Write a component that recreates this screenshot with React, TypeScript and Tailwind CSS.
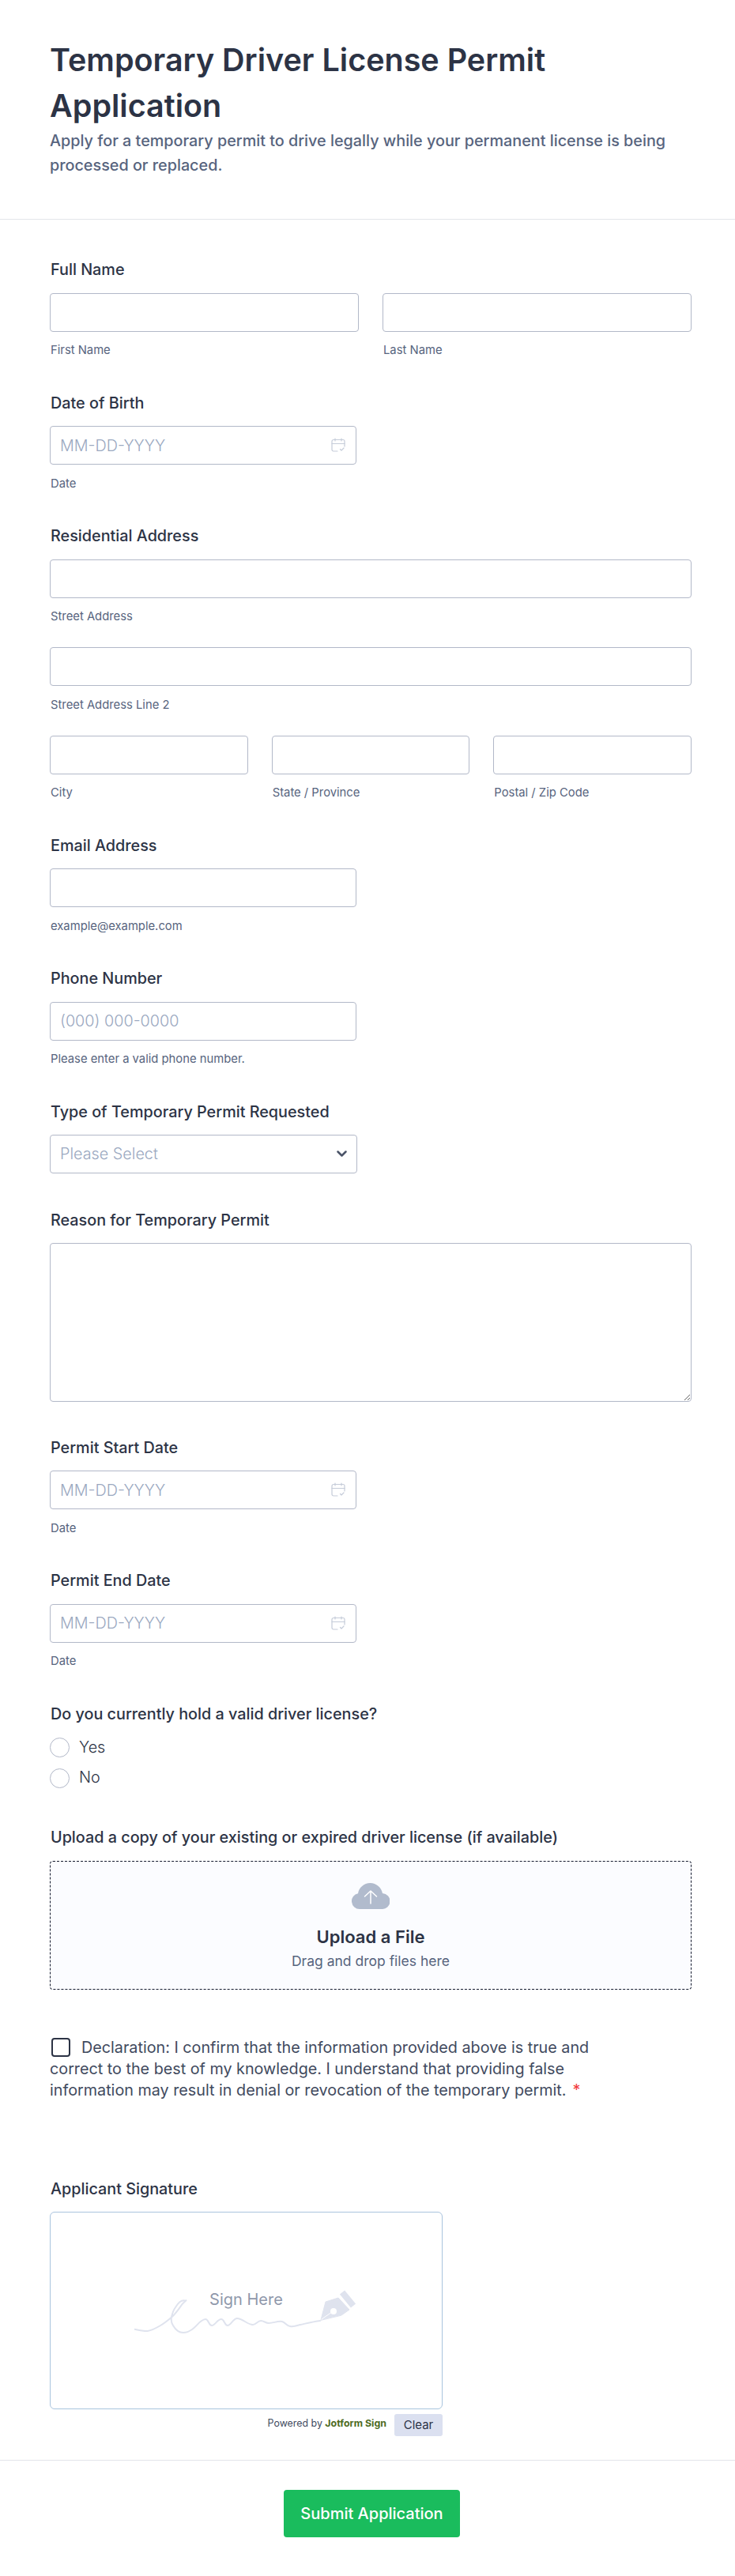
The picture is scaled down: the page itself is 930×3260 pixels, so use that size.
import React from 'react'

const inputCls =
  'block h-[49px] w-full rounded-[4px] border border-[#b2b8c8] bg-white px-[12px] text-[19.8px] font-light text-[#2c3345] outline-none placeholder:text-[#9aa8bf]'

function Label({ children }: { children: React.ReactNode }) {
  return <label className="mb-[17.5px] ml-[1px] block text-[19.8px] leading-[24px] font-medium text-[#2c3345]">{children}</label>
}

function Sub({ children }: { children: React.ReactNode }) {
  return <div className="mt-[15.5px] ml-[1px] text-[14.8px] leading-[16px] text-[#57647e]">{children}</div>
}

function CalendarIcon() {
  return (
    <svg width="18" height="18" viewBox="0 0 18 18" fill="none" stroke="#c5ccd9" strokeWidth="1.200" strokeLinecap="round" strokeLinejoin="round">
      <path d="M5 1v3M13 1v3M1 7.500h16" />
      <path d="M8 17H3a2 2 0 0 1-2-2V4.500a2 2 0 0 1 2-2h12a2 2 0 0 1 2 2V11" />
      <path d="M11.500 14.500l1.500 1.500 3-3" />
    </svg>
  )
}

function DateField({ label }: { label: string }) {
  return (
    <div className="mb-[46.5px]">
      <Label>{label}</Label>
      <div className="relative w-[388px]">
        <input className={inputCls} placeholder="MM-DD-YYYY" />
        <span className="absolute top-[15px] right-[14px]">
          <CalendarIcon />
        </span>
      </div>
      <Sub>Date</Sub>
    </div>
  )
}

function Radio({ text }: { text: string }) {
  return (
    <div className="flex h-[27px] items-center gap-[12px]">
      <span className="h-[25px] w-[25px] rounded-full border border-[#b2b8c8] bg-white" />
      <span className="text-[19.8px] font-light text-[#2c3345]">{text}</span>
    </div>
  )
}

export default function App() {
  return (
    <div className="min-h-[3260px] bg-white font-['Inter',sans-serif] text-[#2c3345]">
      <header className="h-[278px] border-b border-[#e3e5ea] px-[63px] pt-[47px]">
        <h1 className="w-[800px] text-[39.5px] leading-[58px] font-semibold">Temporary Driver License Permit Application</h1>
        <p className="w-[800px] text-[19.8px] leading-[31px] font-medium text-[#57647e]">
          Apply for a temporary permit to drive legally while your permanent license is being processed or replaced.
        </p>
      </header>

      <main className="px-[63px] pt-[51px]">
        <div className="mb-[46.5px] w-[812px]">
          <Label>Full Name</Label>
          <div className="flex gap-[30px]">
            <div className="flex-1">
              <input className={inputCls} />
              <Sub>First Name</Sub>
            </div>
            <div className="flex-1">
              <input className={inputCls} />
              <Sub>Last Name</Sub>
            </div>
          </div>
        </div>

        <DateField label="Date of Birth" />

        <div className="mb-[46.5px] w-[812px]">
          <Label>Residential Address</Label>
          <input className={inputCls} />
          <Sub>Street Address</Sub>
          <input className={`${inputCls} mt-[31px]`} />
          <Sub>Street Address Line 2</Sub>
          <div className="mt-[31px] flex gap-[30px]">
            <div className="flex-1">
              <input className={inputCls} />
              <Sub>City</Sub>
            </div>
            <div className="flex-1">
              <input className={inputCls} />
              <Sub>State / Province</Sub>
            </div>
            <div className="flex-1">
              <input className={inputCls} />
              <Sub>Postal / Zip Code</Sub>
            </div>
          </div>
        </div>

        <div className="mb-[46.5px] w-[388px]">
          <Label>Email Address</Label>
          <input className={inputCls} />
          <Sub>example@example.com</Sub>
        </div>

        <div className="mb-[46.5px] w-[388px]">
          <Label>Phone Number</Label>
          <input className={inputCls} placeholder="(000) 000-0000" />
          <Sub>Please enter a valid phone number.</Sub>
        </div>

        <div className="mb-[46.5px] w-[389px]">
          <Label>Type of Temporary Permit Requested</Label>
          <div className="relative">
            <select className={`${inputCls} appearance-none text-[#9aa8bf]`} defaultValue="">
              <option value="">Please Select</option>
            </select>
            <svg className="absolute top-[20px] right-[13px]" width="13" height="9" viewBox="0 0 13 9" fill="none" stroke="#4b5468" strokeWidth="2.500" strokeLinecap="round" strokeLinejoin="round">
              <path d="M1.500 1.500l5 5 5-5" />
            </svg>
          </div>
        </div>

        <div className="mb-[45.5px] w-[812px]">
          <Label>Reason for Temporary Permit</Label>
          <textarea className="block h-[201px] w-full rounded-[4px] border border-[#b2b8c8] bg-white outline-none" />
        </div>

        <DateField label="Permit Start Date" />
        <DateField label="Permit End Date" />

        <div className="mb-[49.5px]">
          <Label>Do you currently hold a valid driver license?</Label>
          <div className="flex flex-col gap-[11.5px]">
            <Radio text="Yes" />
            <Radio text="No" />
          </div>
        </div>

        <div className="mb-[60.5px] w-[812px]">
          <Label>Upload a copy of your existing or expired driver license (if available)</Label>
          <div className="flex h-[163px] flex-col items-center rounded-[4px] border border-dashed border-[#141a2e] bg-[#fbfcff] pt-[27px]">
            <svg width="48" height="33" viewBox="0 0 48 33">
              <path d="M10 33a10 10 0 0 1-2-19.800C9 6 15.500 0 23.500 0 31 0 37.500 5.500 39 13a10 10 0 0 1-1 20z" fill="#b1bbcd" />
              <path d="M24 26V10M16.500 17L24 10l7.500 7" fill="none" stroke="#fff" strokeWidth="1.500" strokeLinecap="round" strokeLinejoin="round" />
            </svg>
            <div className="mt-[21px] text-[22px] leading-[28px] font-semibold">Upload a File</div>
            <div className="mt-[6px] text-[17.5px] leading-[22px] text-[#57647e]">Drag and drop files here</div>
          </div>
        </div>

        <div className="mb-[98.5px] w-[700px] text-[19.75px] leading-[27px] text-[#414a5e]">
          <span className="mr-[14px] ml-[2px] inline-block h-[24px] w-[24px] rounded-[4px] border-2 border-[#2c3345] bg-white align-[-5px]" />
          Declaration: I confirm that the information provided above is true and correct to the best of my knowledge. I understand that providing false information may result in denial or revocation of the temporary permit.
          <span className="ml-[8px] text-[#f23a3c]">*</span>
        </div>

        <div className="w-[497px]">
          <Label>Applicant Signature</Label>
          <div className="relative flex h-[250px] w-full items-start justify-center rounded-[6px] border border-[#a9c4de] bg-white pt-[98px]">
            <svg className="absolute top-[97px] left-[106px]" width="282" height="58" viewBox="0 0 282 58" fill="none" stroke="#dfe3ee" strokeWidth="2" strokeLinecap="round" strokeLinejoin="round">
              <path d="M0 50.700C6 52 11 53 16.700 53C23 52 28 49 33 46C38 43 43 39 48 34.700C53 30 57 24 60 19.700C63 16 67 13 65 14.700C60 13 55 18 52 23C49 27 48 31 47 35C46 40 47 43 49 46C53 53 57 55 62 55C66 55 70 53 73 51C79 47 84 38 90 38C94 38 94 46 98 46C102 46 105 38 110 38C114 38 114 46 118 46C122 46 125 37 130 37C137 37 143 45 150 45C154 45 156 40 160 40C164 40 166 43 170 43C176 43 181 40 187 41C191 42 193 47 197 47C202 48 206 46 210 45C219 43 227 41 235 40" />
              <path d="M236 39L242 16L258 11L272 26L262 33Z" fill="#dfe3ee" strokeWidth="1" />
              <path d="M263 4L277 21" strokeWidth="8" strokeLinecap="butt" />
              <path d="M237 38L250 29" stroke="#fff" strokeWidth="1" />
              <circle cx="252" cy="28" r="4" fill="#fff" stroke="none" />
            </svg>
            <span className="relative text-[20px] leading-[24px] text-[#9098ab]">Sign Here</span>
          </div>
          <div className="mt-[6px] flex items-center justify-end gap-[10px]">
            <span className="-mt-[4px] text-[12.4px] text-[#414a5e]">
              Powered by <b className="font-bold text-[#4e6b1f]">Jotform Sign</b>
            </span>
            <button className="h-[28px] w-[61px] rounded-[3px] bg-[#dbe0f0] text-[15px] text-[#2c3345]">Clear</button>
          </div>
        </div>
      </main>

      <footer className="mt-[30px] flex justify-center border-t border-[#e3e5ea] pt-[37px] pl-[11px]">
        <button className="h-[60px] w-[223px] rounded-[4px] bg-[#1abc5d] text-[20px] font-medium text-white">Submit Application</button>
      </footer>
    </div>
  )
}
